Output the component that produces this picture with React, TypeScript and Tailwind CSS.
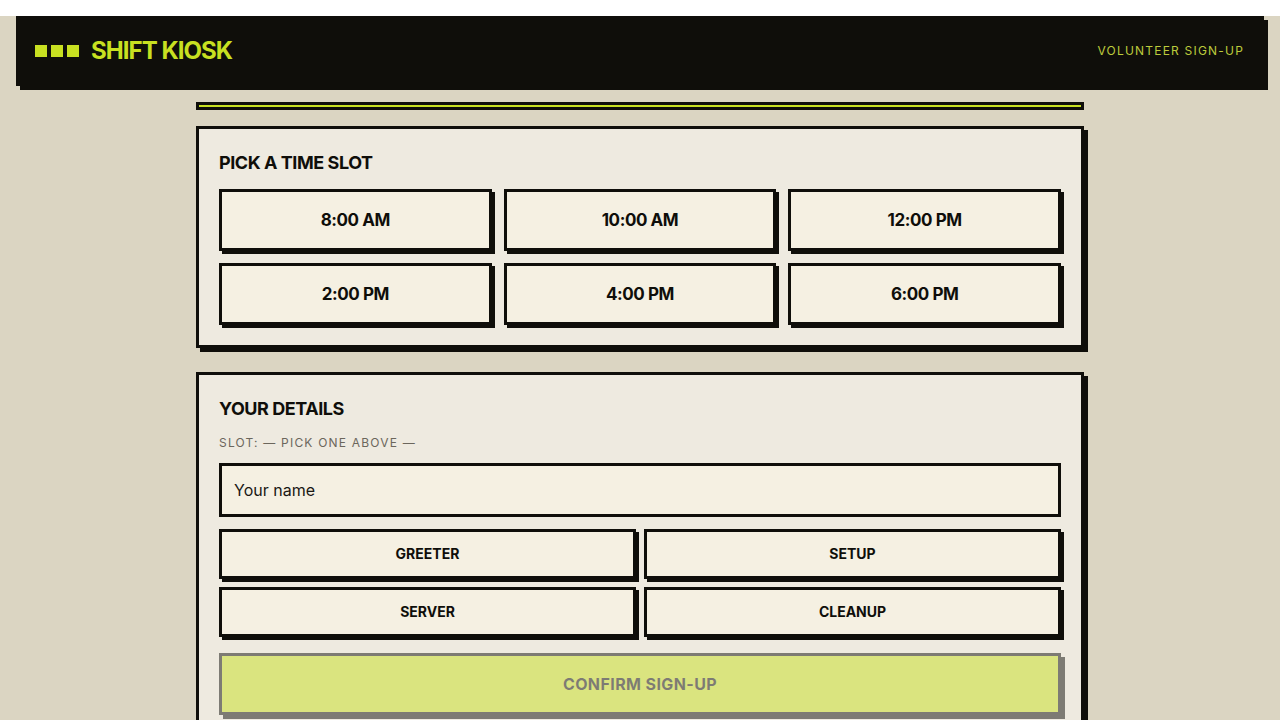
import { useState } from 'react';

const SLOTS = ['8:00 AM', '10:00 AM', '12:00 PM', '2:00 PM', '4:00 PM', '6:00 PM'];
const ROLES = ['Greeter', 'Setup', 'Server', 'Cleanup'];

function Card({ title, children }: { title: string; children: React.ReactNode }) {
  return (
    <section className="border-[3px] border-[#0f0e0a] bg-[#eeeae0] p-5 shadow-[4px_4px_0_#0f0e0a]">
      <h2 className="text-lg font-bold leading-7 tracking-tight text-[#0f0e0a]">{title}</h2>
      {children}
    </section>
  );
}

export default function App() {
  const [slot, setSlot] = useState<string | null>(null);
  const [role, setRole] = useState<string | null>(null);
  const [name, setName] = useState('');
  const ready = !!slot && !!role && name.trim().length > 0;

  return (
    <div className="min-h-screen bg-white font-['Inter',sans-serif] text-[#0f0e0a]">
      <div className="h-4" />
      <div className="min-h-[704px] bg-[#dbd5c2] pb-10">
        <header className="mx-4 flex h-[70px] items-center justify-between bg-[#0f0e0a] pl-[19px] pr-5 shadow-[4px_4px_0_#0f0e0a]">
          <div className="flex items-center gap-3">
            <div className="flex gap-1">
              <span className="h-3 w-3 bg-[#c8e021]" />
              <span className="h-3 w-3 bg-[#c8e021]" />
              <span className="h-3 w-3 bg-[#c8e021]" />
            </div>
            <span className="text-2xl font-bold tracking-[-0.04em] text-[#c8e021]">SHIFT KIOSK</span>
          </div>
          <span className="text-xs tracking-widest text-[#bccb3c]">VOLUNTEER SIGN-UP</span>
        </header>

        <main className="mx-auto w-[888px] pt-4">
          <div className="mb-4 h-2 border-[3px] border-[#0f0e0a] bg-[#c8e021]" />

          <div className="space-y-6">
            <Card title="PICK A TIME SLOT">
              <div className="mt-3 grid grid-cols-3 gap-3">
                {SLOTS.map((s) => (
                  <button
                    key={s}
                    onClick={() => setSlot(s)}
                    className={`border-[3px] border-[#0f0e0a] py-3.5 text-[17px] font-bold leading-7 tracking-tight shadow-[3px_3px_0_#0f0e0a] ${
                      slot === s ? 'bg-[#c8e021]' : 'bg-[#f5f0e2]'
                    }`}
                  >
                    {s}
                  </button>
                ))}
              </div>
            </Card>

            <Card title="YOUR DETAILS">
              <p className="mt-3 text-xs tracking-widest text-[#6b665c]">SLOT: {slot ?? '— PICK ONE ABOVE —'}</p>
              <input
                value={name}
                onChange={(e) => setName(e.target.value)}
                placeholder="Your name"
                className="mt-3 block w-full border-[3px] border-[#0f0e0a] bg-[#f5f0e2] px-3 py-3 text-base leading-6 outline-none placeholder:text-[#1a1814]"
              />
              <div className="mt-3 grid grid-cols-2 gap-2">
                {ROLES.map((r) => (
                  <button
                    key={r}
                    onClick={() => setRole(r)}
                    className={`border-[3px] border-[#0f0e0a] py-3 text-sm font-bold uppercase leading-5 shadow-[3px_3px_0_#0f0e0a] ${
                      role === r ? 'bg-[#c8e021]' : 'bg-[#f5f0e2]'
                    }`}
                  >
                    {r}
                  </button>
                ))}
              </div>
              <button
                disabled={!ready}
                className="mt-4 w-full border-[3px] border-[#0f0e0a] bg-[#c8e021] py-4 text-base font-bold leading-6 tracking-[0.025em] shadow-[4px_4px_0_#0f0e0a] disabled:opacity-50"
              >
                CONFIRM SIGN-UP
              </button>
            </Card>
          </div>
        </main>
      </div>
    </div>
  );
}
